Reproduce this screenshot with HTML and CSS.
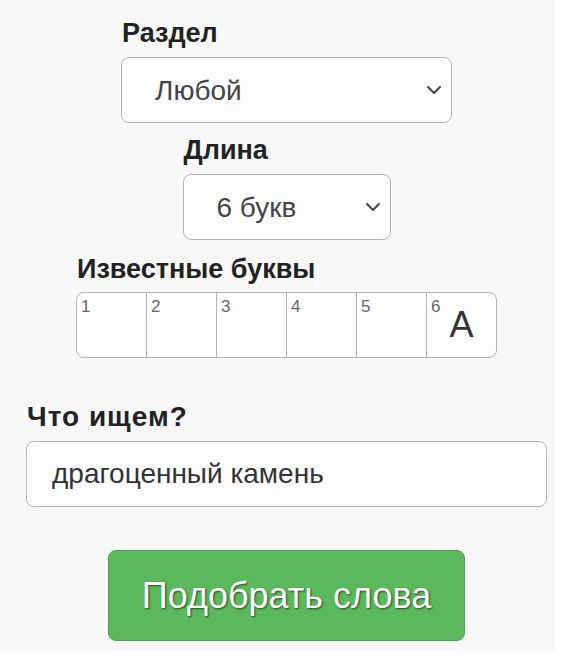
FILE: index.html
```html
<!DOCTYPE html>
<html lang="ru">
<head>
    <meta charset="UTF-8">
    <meta name="viewport" content="width=device-width, initial-scale=1.0">
    <title>Подбор слов</title>
    <link rel="stylesheet" href="styles.css">
</head>
<body>

<div class="page">
    <form class="search-form" action="#" method="get">
        <div class="form-group group-section">
            <label for="section">Раздел</label>
            <div class="select-wrap select-section">
                <select id="section" name="section">
                    <option>Любой</option>
                </select>
                <svg class="chevron" width="16" height="10" viewBox="0 0 16 10"><path d="M2 2l6 6 6-6" fill="none" stroke="#444" stroke-width="2" stroke-linecap="round" stroke-linejoin="round"/></svg>
            </div>
        </div>

        <div class="form-group group-length">
            <label for="length">Длина</label>
            <div class="select-wrap select-length">
                <select id="length" name="length">
                    <option>6 букв</option>
                </select>
                <svg class="chevron" width="16" height="10" viewBox="0 0 16 10"><path d="M2 2l6 6 6-6" fill="none" stroke="#444" stroke-width="2" stroke-linecap="round" stroke-linejoin="round"/></svg>
            </div>
        </div>

        <div class="form-group group-letters">
            <label>Известные буквы</label>
            <div class="letters">
                <div class="cell"><span class="num">1</span><span class="letter"></span></div>
                <div class="cell"><span class="num">2</span><span class="letter"></span></div>
                <div class="cell"><span class="num">3</span><span class="letter"></span></div>
                <div class="cell"><span class="num">4</span><span class="letter"></span></div>
                <div class="cell"><span class="num">5</span><span class="letter"></span></div>
                <div class="cell"><span class="num">6</span><span class="letter">A</span></div>
            </div>
        </div>

        <div class="form-group group-query">
            <label for="query">Что ищем?</label>
            <input type="text" id="query" name="query" value="драгоценный камень">
        </div>

        <button type="submit" class="btn-submit">Подобрать слова</button>
    </form>
</div>

</body>
</html>
```

FILE: styles.css
```css
body {
    margin: 0;
    background-color: #ffffff;
    font-family: "Liberation Sans", Arial, sans-serif;
}
.page {
    width: 555px;
    height: 652px;
    box-sizing: border-box;
    padding: 19px 0 0 18px;
    background-color: #f8f8f8;
}
.search-form {
    display: flex;
    flex-direction: column;
    align-items: center;
}
.form-group {
    display: flex;
    flex-direction: column;
    align-items: flex-start;
}
.form-group label {
    display: block;
    margin: 0 0 10px 1px;
    font-size: 27px;
    line-height: 28px;
    font-weight: 700;
    color: #222222;
}
.group-length {
    margin-top: 13px;
}
.group-letters {
    margin-top: 15px;
}
.group-letters label {
    margin-bottom: 9px;
}
.group-query {
    margin-top: 45px;
}
.group-query label {
    font-size: 28px;
    letter-spacing: 1px;
    margin-bottom: 10px;
}

/* selects */
.select-wrap {
    position: relative;
}
.select-wrap select {
    appearance: none;
    -webkit-appearance: none;
    display: block;
    width: 100%;
    height: 66px;
    padding: 0 40px 0 33px;
    border: 1px solid #b3b3b3;
    border-radius: 8px;
    background-color: #fdfdfd;
    font-family: "Liberation Sans", Arial, sans-serif;
    font-size: 28px;
    color: #444444;
}
.select-section {
    width: 331px;
}
.select-length {
    width: 208px;
}
.chevron {
    position: absolute;
    right: 10px;
    top: 28px;
    pointer-events: none;
}

/* known letters */
.letters {
    display: flex;
    width: 421px;
    height: 66px;
    box-sizing: border-box;
    border: 1px solid #b3b3b3;
    border-radius: 8px;
    background-color: #fdfdfd;
    overflow: hidden;
}
.cell {
    flex: 1;
    display: grid;
    border-left: 1px solid #b3b3b3;
}
.cell:first-child {
    border-left: none;
}
.cell .num,
.cell .letter {
    grid-area: 1 / 1;
}
.cell .num {
    align-self: start;
    justify-self: start;
    margin: 6px 0 0 4px;
    font-size: 17px;
    line-height: 16px;
    color: #666666;
}
.cell .letter {
    align-self: center;
    justify-self: center;
    font-size: 36px;
    line-height: 40px;
    color: #333333;
}

/* query */
.group-query input {
    width: 521px;
    height: 66px;
    box-sizing: border-box;
    padding: 0 25px;
    border: 1px solid #b3b3b3;
    border-radius: 8px;
    background-color: #fdfdfd;
    font-family: "Liberation Sans", Arial, sans-serif;
    font-size: 28px;
    color: #333333;
}

/* button */
.btn-submit {
    margin-top: 43px;
    width: 357px;
    height: 91px;
    border: 1px solid #47a447;
    border-radius: 8px;
    background-color: #5cb85c;
    font-family: "Liberation Sans", Arial, sans-serif;
    font-size: 36px;
    color: #ffffff;
    text-shadow: 1px 1px 2px rgba(0, 0, 0, 0.6);
    cursor: pointer;
}
```
